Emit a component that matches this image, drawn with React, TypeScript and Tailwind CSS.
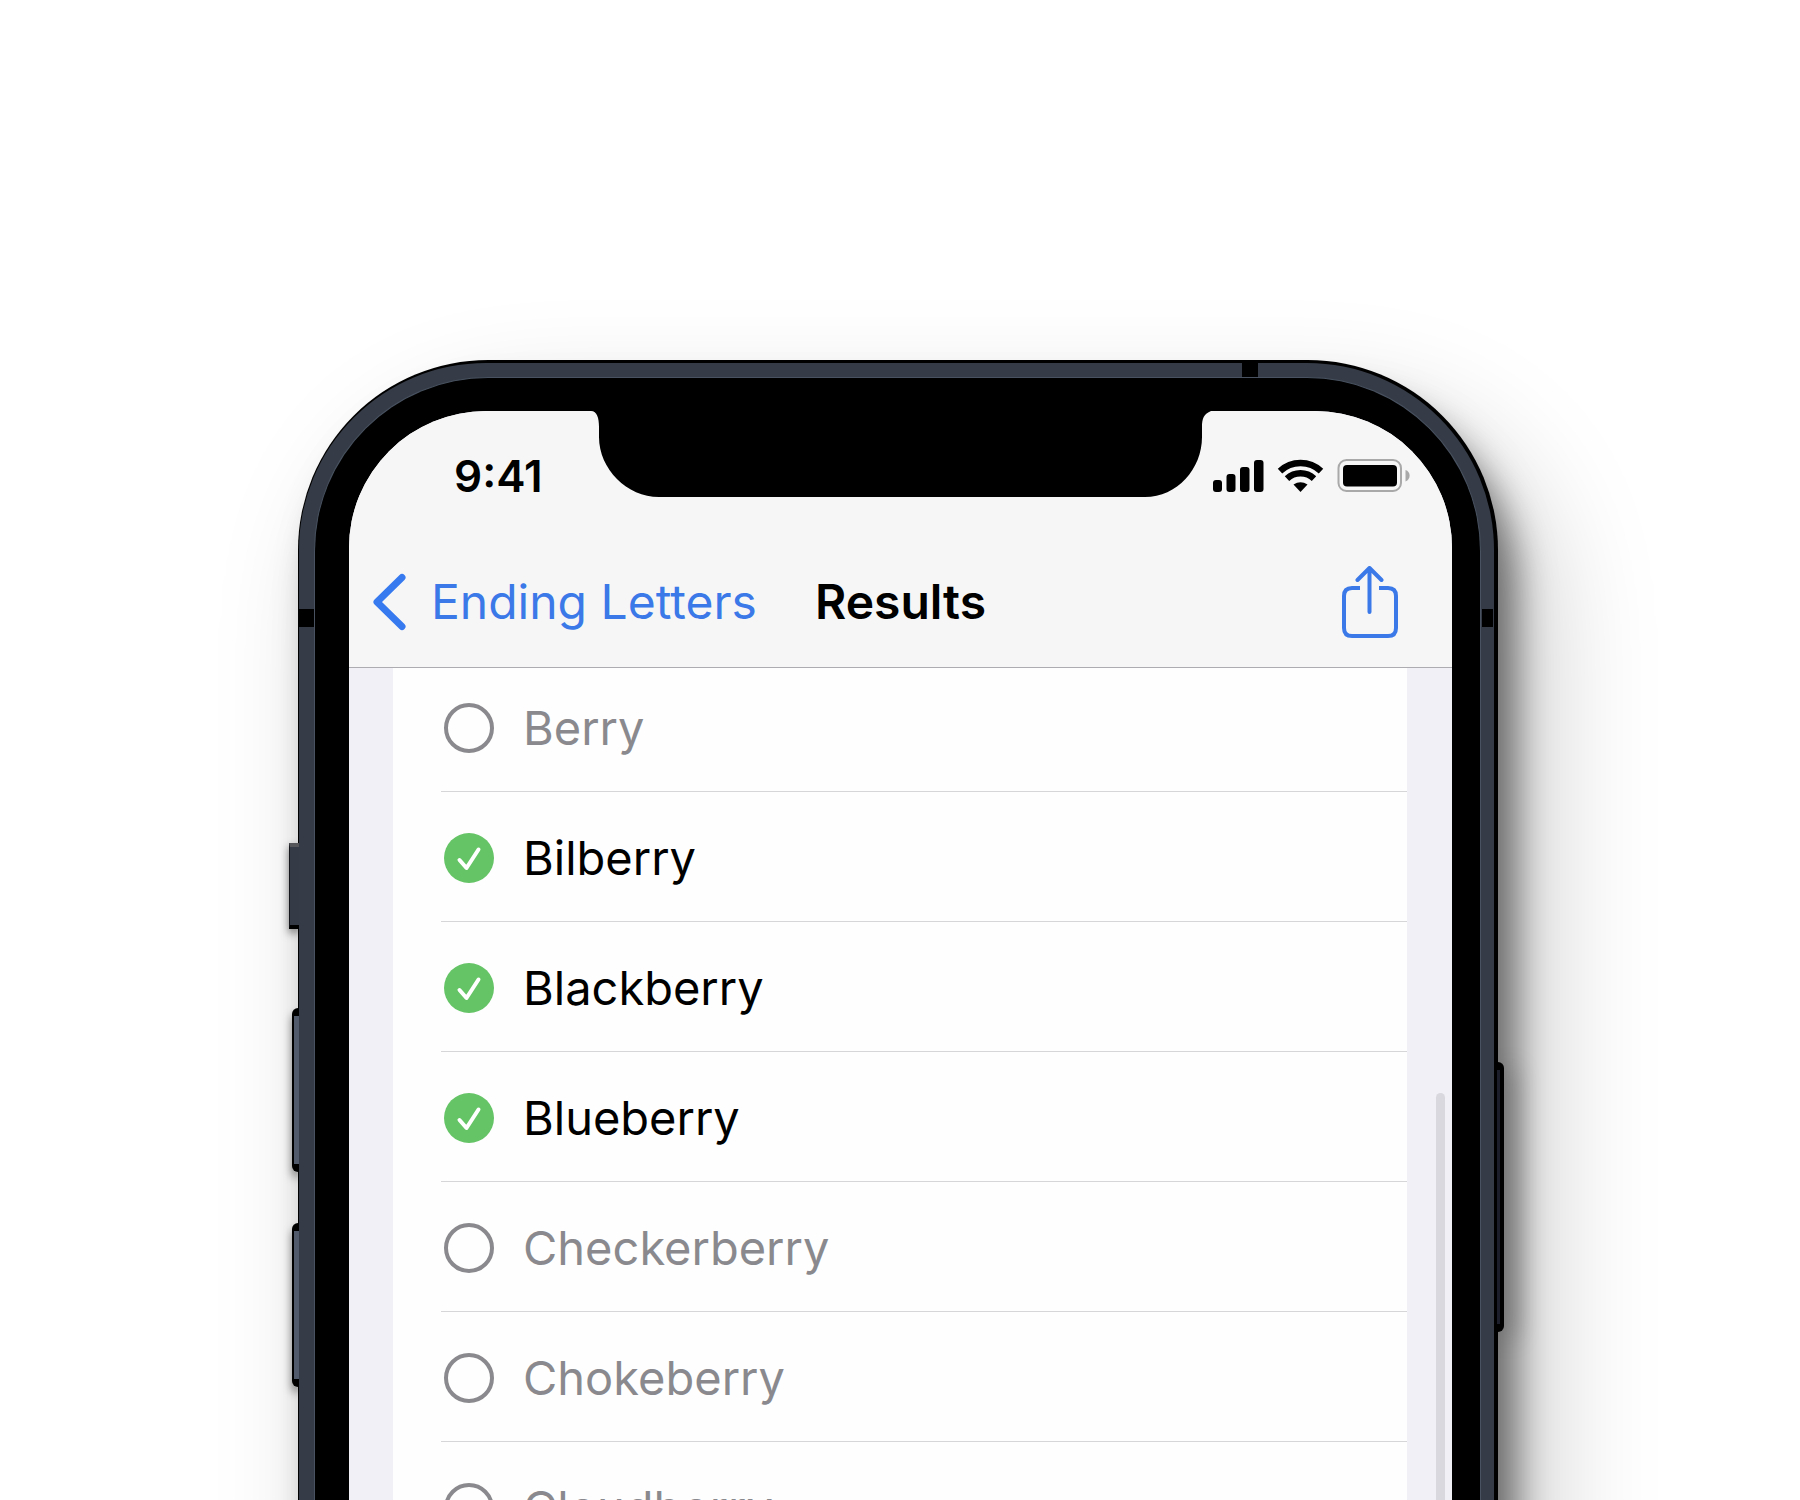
import React from "react";

const berries = [
  { name: "Berry", checked: false },
  { name: "Bilberry", checked: true },
  { name: "Blackberry", checked: true },
  { name: "Blueberry", checked: true },
  { name: "Checkerberry", checked: false },
  { name: "Chokeberry", checked: false },
  { name: "Cloudberry", checked: false },
];

function Notch() {
  return (
    <svg
      aria-hidden="true"
      viewBox="0 0 620 86"
      className="absolute left-1/2 top-0 h-[86px] w-[620px] -translate-x-1/2"
    >
      <path
        d="M0 0H620C613 3 611 7 611 16V26C611 58 586 86 554 86H68C36 86 8 58 8 26V16C8 7 6 0 0 0Z"
        fill="#000"
      />
    </svg>
  );
}

function StatusIcons() {
  return (
    <svg aria-label="Signal, Wi-Fi and battery" role="img" viewBox="0 0 198 36" className="h-9 w-[198px]">
      <g fill="#000">
        <rect x="0" y="21" width="9" height="12" rx="3" />
        <rect x="13.500" y="15" width="9" height="18" rx="3" />
        <rect x="27" y="8" width="9.500" height="25" rx="3" />
        <rect x="41" y="1" width="9.500" height="32" rx="3" />
      </g>
      <g fill="none" stroke="#000" strokeWidth="6.500">
        <path d="M67 12.200A30 30 0 0 1 108 12.200" />
        <path d="M74 19.600A19.800 19.800 0 0 1 101 19.600" />
      </g>
      <path d="M80.500 25.500A12.500 12.500 0 0 1 94.500 25.500L87.500 33Z" fill="#000" />
      <rect x="125.500" y="1" width="62.500" height="31" rx="8" fill="none" stroke="#a9a9a9" strokeWidth="2" />
      <rect x="130" y="6" width="54" height="21.500" rx="4" fill="#000" />
      <path d="M192.500 11C198 12.500 198 20.500 192.500 22.500Z" fill="#a9a9a9" />
    </svg>
  );
}

function StatusBar() {
  return (
    <div className="flex h-[137px] items-start justify-between pl-[105px] pr-[41px] pt-10">
      <span className="text-[44px] font-semibold leading-[50px]">9:41</span>
      <span className="pt-2">
        <StatusIcons />
      </span>
    </div>
  );
}

function NavBar() {
  return (
    <nav className="grid h-[120px] grid-cols-[1fr_auto_1fr] items-center border-b border-[#adadb1] px-6 pb-[11px]">
      <button type="button" className="flex items-center gap-6 justify-self-start whitespace-nowrap text-[#3b79e8]">
        <svg aria-hidden="true" viewBox="0 0 34 58" className="h-[58px] w-[34px]" fill="none">
          <path d="M29 4.500L4 29L29 53.500" stroke="#377af0" strokeWidth="7" strokeLinecap="round" strokeLinejoin="round" />
        </svg>
        <span>Ending Letters</span>
      </button>
      <h1 className="font-semibold">Results</h1>
      <button type="button" aria-label="Share" className="mr-[29px] justify-self-end">
        <svg aria-hidden="true" viewBox="0 0 58 72" className="h-[72px] w-[58px]" fill="none" stroke="#3b79e8" strokeWidth="4">
          <path d="M19 22H11Q3 22 3 30V62Q3 70 11 70H47Q55 70 55 62V30Q55 22 47 22H38" />
          <path d="M28.500 46V4M16.500 14L28.500 2L40.500 14" strokeLinecap="round" strokeLinejoin="round" />
        </svg>
      </button>
    </nav>
  );
}

function Row({ name, checked }: { name: string; checked: boolean }) {
  return (
    <li className="pl-12">
      <label className="flex h-[130px] items-center gap-[29px] border-b border-[#d6d6d8] pl-[3px] pt-[3px] text-[47px] text-[#8a8a8e] has-checked:text-black">
        <span className="relative flex size-[50px] shrink-0">
          <input
            type="checkbox"
            defaultChecked={checked}
            className="peer size-full appearance-none rounded-full border-4 border-[#8a8a8e] checked:border-0 checked:bg-[#65c466]"
          />
          <svg
            aria-hidden="true"
            viewBox="0 0 50 50"
            className="pointer-events-none absolute inset-0 hidden peer-checked:block"
            fill="none"
          >
            <path d="M15.500 27L22.500 35L34.500 16.500" stroke="#fff" strokeWidth="4" strokeLinecap="round" strokeLinejoin="round" />
          </svg>
        </span>
        <span>{name}</span>
      </label>
    </li>
  );
}

function SideButtons() {
  return (
    <div aria-hidden="true">
      <span className="absolute -left-[9px] top-[483px] h-[86px] w-[10px] border-y-4 border-l border-t-[#55565a] border-b-black border-l-[#14161c] bg-[#343a46] shadow-[0_4px_8px_rgba(0,0,0,0.5)]" />
      <span className="absolute -left-[6px] top-[648px] h-[164px] w-[7px] rounded-l-md border-y-8 border-l-2 border-black bg-[#515a6b] shadow-[0_6px_8px_rgba(0,0,0,0.5)]" />
      <span className="absolute -left-[6px] top-[863px] h-[164px] w-[7px] rounded-l-md border-y-8 border-l-2 border-black bg-[#515a6b] shadow-[0_6px_8px_rgba(0,0,0,0.5)]" />
      <span className="absolute -right-[6px] top-[702px] h-[270px] w-[7px] rounded-r-md border-y-8 border-r-4 border-black bg-[#1d1e2c] shadow-[10px_6px_24px_rgba(0,0,0,0.4)]" />
    </div>
  );
}

export default function App() {
  return (
    <main className="flex h-screen flex-col overflow-hidden bg-white pl-[298px] pr-[302px] pt-[360px] font-['Inter',sans-serif] text-[48px] leading-[60px] text-black">
      <div className="relative -mb-[200px] flex min-h-0 flex-1 flex-col rounded-t-[190px] bg-black pl-px pr-1 pt-[3px] shadow-[18px_36px_36px_rgba(0,0,0,0.5),40px_60px_120px_rgba(0,0,0,0.22)]">
        <SideButtons />
        <div className="relative flex min-h-0 flex-1 flex-col rounded-t-[187px] bg-[#363c47] pl-[15px] pr-[13px] pt-[14px]">
          <span className="absolute right-[236px] top-0 h-[14px] w-4 bg-black" />
          <span className="absolute left-0 top-[246px] h-[18px] w-[15px] bg-black" />
          <span className="absolute right-px top-[246px] h-[18px] w-[11px] bg-black" />
          <div className="flex min-h-0 flex-1 flex-col rounded-t-[174px] border-x border-t border-[#485260] bg-black pl-[34px] pr-7 pt-[33px]">
            <div className="relative flex min-h-0 flex-1 flex-col overflow-hidden rounded-t-[137px] bg-[#f1f0f6]">
              <Notch />
              <header className="bg-[#f6f6f7]">
                <StatusBar />
                <NavBar />
              </header>
              <section aria-label="Results list" className="min-h-0 flex-1 overflow-hidden pl-11 pr-[45px]">
                <ul className="-mt-[6px] bg-[#fefefe]">
                  {berries.map((berry) => (
                    <Row key={berry.name} name={berry.name} checked={berry.checked} />
                  ))}
                </ul>
              </section>
              <span aria-hidden="true" className="absolute right-[7px] top-[682px] h-[640px] w-[9px] rounded-full bg-[#d9d8de]" />
            </div>
          </div>
        </div>
      </div>
    </main>
  );
}
